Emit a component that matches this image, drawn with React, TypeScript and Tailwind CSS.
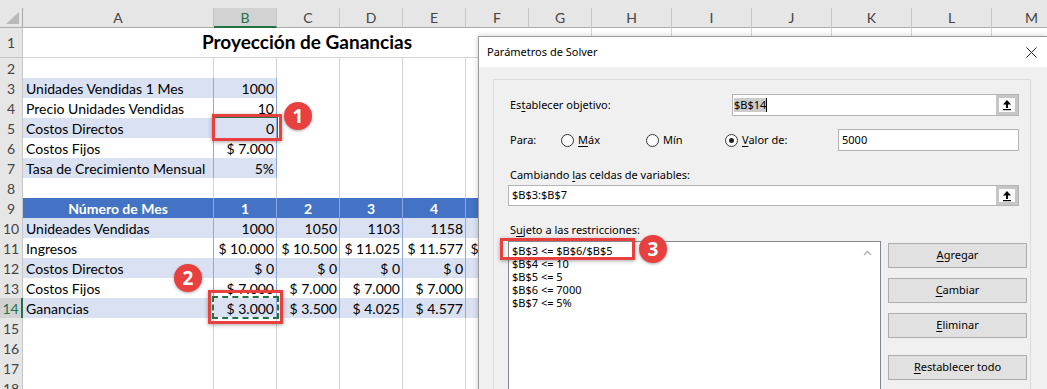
import React from 'react';

const COLS =
  'grid grid-cols-[23px_191px_63px_63px_63px_63px_63px_63px_80px_80px_80px_80px_80px_80px]';
const LETTERS = ['A', 'B', 'C', 'D', 'E', 'F', 'G', 'H', 'I', 'J', 'K', 'L', 'M'];

const inputs: Record<number, string[]> = {
  3: ['Unidades Vendidas 1 Mes', '1000'],
  4: ['Precio Unidades Vendidas', '10'],
  5: ['Costos Directos', '0'],
  6: ['Costos Fijos', '$ 7.000'],
  7: ['Tasa de Crecimiento Mensual', '5%'],
};

const projection: Record<number, string[]> = {
  9: ['Número de Mes', '1', '2', '3', '4', '5'],
  10: ['Unideades Vendidas', '1000', '1050', '1103', '1158', '1216'],
  11: ['Ingresos', '$ 10.000', '$ 10.500', '$ 11.025', '$ 11.577', '$ 12.155'],
  12: ['Costos Directos', '$ 0', '$ 0', '$ 0', '$ 0', '$ 0'],
  13: ['Costos Fijos', '$ 7.000', '$ 7.000', '$ 7.000', '$ 7.000', '$ 7.000'],
  14: ['Ganancias', '$ 3.000', '$ 3.500', '$ 4.025', '$ 4.577', '$ 5.155'],
};

const constraints = ['$B$3 <= $B$6/$B$5', '$B$4 <= 10', '$B$5 <= 5', '$B$6 <= 7000', '$B$7 <= 5%'];

const rows = Array.from({ length: 18 }, (_, i) => i + 1);

function cellClass(row: number, col: number) {
  if (inputs[row] && col < 2) {
    const fill = row % 2 ? 'bg-[#d9e1f2]' : 'bg-white';
    const align = col === 0 ? 'justify-start pl-[3px]' : 'justify-end pr-[2px]';
    return `${fill} ${align} border-r border-b border-[#8ea9db]`;
  }
  if (projection[row] && col < 6) {
    if (row === 9) return 'bg-[#4472c4] text-white font-bold justify-center border-r border-b border-[#8ea9db]';
    const fill = row % 2 ? 'bg-white' : 'bg-[#d9e1f2]';
    const align = col === 0 ? 'justify-start pl-[3px]' : 'justify-end pr-[2px]';
    const line =
      row === 13
        ? 'border-r border-b border-[#8ea9db] border-b-black'
        : row === 14
          ? 'border-r border-b-2 border-[#8ea9db] border-b-black'
          : 'border-r border-b border-[#8ea9db]';
    return `${fill} ${align} ${line}`;
  }
  return 'bg-white border-r border-b border-[#d4d4d4]';
}

function cellText(row: number, col: number) {
  if (inputs[row] && col < 2) return inputs[row][col];
  if (projection[row] && col < 6) return projection[row][col];
  return '';
}

const UpArrow = () => (
  <svg width="10" height="12" viewBox="0 0 10 12">
    <polygon points="5,1 9,5.5 1,5.5" fill="#000" />
    <rect x="4" y="5" width="2" height="4" fill="#000" />
    <rect x="1" y="10" width="8" height="1.2" fill="#000" />
  </svg>
);

const RefButton = () => (
  <div className="absolute right-0 top-0 bottom-0 w-[22px] border-[3px] border-[#c6c6c6] bg-[#fbfbfb] flex items-center justify-center">
    <UpArrow />
  </div>
);

const Radio = ({ on }: { on?: boolean }) => (
  <span className="w-[13px] h-[13px] rounded-full border border-[#333] bg-white flex items-center justify-center shrink-0">
    {on && <span className="w-[5px] h-[5px] rounded-full bg-[#222]" />}
  </span>
);

const Badge = ({ n, className }: { n: string; className: string }) => (
  <div
    className={`absolute w-[28px] h-[28px] rounded-full bg-[#e8403f] text-white font-bold text-[19px] flex items-center justify-center shadow-[0_1px_3px_rgba(0,0,0,0.35)] font-['Open_Sans',sans-serif] ${className}`}
  >
    {n}
  </div>
);

const ActionButton = ({ k, rest, className }: { k: string; rest: string; className: string }) => (
  <button
    className={`w-[139px] h-[25px] bg-[#e1e1e1] border border-[#adadad] flex items-center justify-center ${className}`}
  >
    <span>
      <u className="underline-offset-2">{k}</u>
      {rest}
    </span>
  </button>
);

export default function App() {
  return (
    <div className="relative w-[1047px] h-[389px] overflow-hidden bg-white">
      {/* sheet */}
      <div className="font-['Lato',sans-serif] text-[14px] text-black">
        <div className={`${COLS} bg-[#e6e6e6] pt-[8px]`}>
          <div className="relative h-[20px] border-r border-b border-[#ababab]">
            <svg className="absolute right-[3px] bottom-[3px]" width="13" height="12" viewBox="0 0 13 12">
              <polygon points="13,0 13,12 0,12" fill="#b9b9b9" />
            </svg>
          </div>
          {LETTERS.map((l) => (
            <div
              key={l}
              className={
                l === 'B'
                  ? 'h-[20px] flex items-center justify-center bg-[#d2d2d2] text-[#217346] border-r border-[#c6c6c6] border-b-2 border-b-[#217346]'
                  : 'h-[20px] flex items-center justify-center text-[#444] border-r border-[#c6c6c6] border-b border-b-[#ababab]'
              }
            >
              {l}
            </div>
          ))}
        </div>

        {rows.map((n) => (
          <div key={n} className={`${COLS} ${n === 1 ? 'h-[30px]' : 'h-[20px]'}`}>
            <div
              className={
                n === 14
                  ? 'flex items-center justify-center bg-[#d2d2d2] text-[#217346] border-b border-[#c6c6c6] border-r-2 border-r-[#217346]'
                  : 'flex items-center justify-center bg-[#e6e6e6] text-[#444] border-r border-b border-[#c6c6c6]'
              }
            >
              {n}
            </div>
            {n === 1 ? (
              <>
                <div className="col-span-7 flex items-center justify-center font-bold text-[19px] border-r border-b border-[#d4d4d4]">
                  Proyección de Ganancias
                </div>
                {LETTERS.slice(7).map((l) => (
                  <div key={l} className="border-r border-b border-[#d4d4d4]" />
                ))}
              </>
            ) : (
              LETTERS.map((l, c) => (
                <div key={l} className={`flex items-center whitespace-nowrap overflow-hidden ${cellClass(n, c)}`}>
                  {cellText(n, c)}
                </div>
              ))
            )}
          </div>
        ))}
      </div>

      {/* selected cell B5 and copied cell B14 */}
      <div className="absolute left-[214px] top-[117px] w-[64px] h-[22px] border border-[#217346]" />
      <div className="absolute left-[212px] top-[296px] w-[67px] h-[23px] border-2 border-white">
        <div className="absolute inset-[-2px] border-2 border-dashed border-[#217346]" />
      </div>

      {/* callouts on the sheet */}
      <div className="absolute left-[212px] top-[114px] w-[70px] h-[27px] border-[3px] border-[#e8403f] shadow-[0_1px_4px_rgba(0,0,0,0.35)]" />
      <div className="absolute left-[208px] top-[290px] w-[75px] h-[34px] border-[3px] border-[#e8403f] shadow-[0_1px_4px_rgba(0,0,0,0.35)]" />
      <Badge n="1" className="left-[284px] top-[102px]" />
      <Badge n="2" className="left-[174px] top-[264px]" />

      {/* Solver dialog */}
      <div className="absolute left-[478px] top-[36px] w-[569px] h-[360px] bg-[#f0f0f0] border-l border-t border-[#9a9a9a] shadow-[0_0_6px_rgba(0,0,0,0.2)] font-['Noto_Sans',sans-serif] text-[11px] text-black">
        <div className="h-[30px] bg-white flex items-center justify-between pl-[8px] pr-[10px]">
          <span>Parámetros de Solver</span>
          <svg width="11" height="11" viewBox="0 0 11 11">
            <path d="M0.5 0.5 L10.5 10.5 M10.5 0.5 L0.5 10.5" stroke="#222" strokeWidth="1" />
          </svg>
        </div>

        <div className="ml-[14px] mt-[12px] w-[538px] h-[320px] border border-[#dcdcdc] pl-[14px]">
          <div className="mt-[14px] h-[22px] flex items-center">
            <div className="w-[224px] pl-[2px]">
              Es<u className="underline-offset-2">t</u>ablecer objetivo:
            </div>
            <div className="relative w-[287px] h-full bg-white border border-[#b4b4b4] flex items-center pl-[1px]">
              <span className="bg-[#cccccc] leading-[14px]">$B$14</span>
              <span className="w-px h-[14px] bg-black" />
              <RefButton />
            </div>
          </div>

          <div className="mt-[13px] h-[22px] flex items-center">
            <div className="w-[53px] pl-[2px]">Para:</div>
            <div className="w-[85px] flex items-center gap-[4px]">
              <Radio />
              <span>
                <u className="underline-offset-2">M</u>áx
              </span>
            </div>
            <div className="w-[79px] flex items-center gap-[4px]">
              <Radio />
              <span>Mín</span>
            </div>
            <div className="w-[113px] flex items-center gap-[4px]">
              <Radio on />
              <span>
                <u className="underline-offset-2">V</u>alor de:
              </span>
            </div>
            <div className="w-[181px] h-full bg-white border border-[#b4b4b4] flex items-center pl-[3px]">5000</div>
          </div>

          <div className="mt-[16px] h-[16px] flex items-center pl-[2px]">
            <span>
              Cambiando <u className="underline-offset-2">l</u>as celdas de variables:
            </span>
          </div>
          <div className="relative mt-[2px] w-[511px] h-[21px] bg-white border border-[#b4b4b4] flex items-center pl-[3px]">
            $B$3:$B$7
            <RefButton />
          </div>

          <div className="mt-[16px] h-[16px] flex items-center pl-[2px]">
            <span>
              S<u className="underline-offset-2">u</u>jeto a las restricciones:
            </span>
          </div>

          <div className="mt-[3px] flex">
            <div className="relative w-[373px] h-[160px] bg-white border border-[#828790] pl-[3px] pt-[2px] leading-[13px]">
              {constraints.map((c) => (
                <div key={c}>{c}</div>
              ))}
              <svg className="absolute right-[8px] top-[8px]" width="9" height="6" viewBox="0 0 9 6">
                <path d="M1 5 L4.5 1.5 L8 5" fill="none" stroke="#b0b0b0" strokeWidth="1.3" />
              </svg>
            </div>
            <div className="ml-[7px] flex flex-col">
              <ActionButton k="A" rest="gregar" className="mt-[2px]" />
              <ActionButton k="C" rest="ambiar" className="mt-[10px]" />
              <ActionButton k="E" rest="liminar" className="mt-[10px]" />
              <ActionButton k="R" rest="establecer todo" className="mt-[17px]" />
            </div>
          </div>
        </div>
      </div>

      {/* callout on the dialog */}
      <div className="absolute left-[500px] top-[238px] w-[135px] h-[22px] border-[3px] border-[#e8403f] shadow-[0_1px_4px_rgba(0,0,0,0.35)]" />
      <Badge n="3" className="left-[639px] top-[235px]" />
    </div>
  );
}
